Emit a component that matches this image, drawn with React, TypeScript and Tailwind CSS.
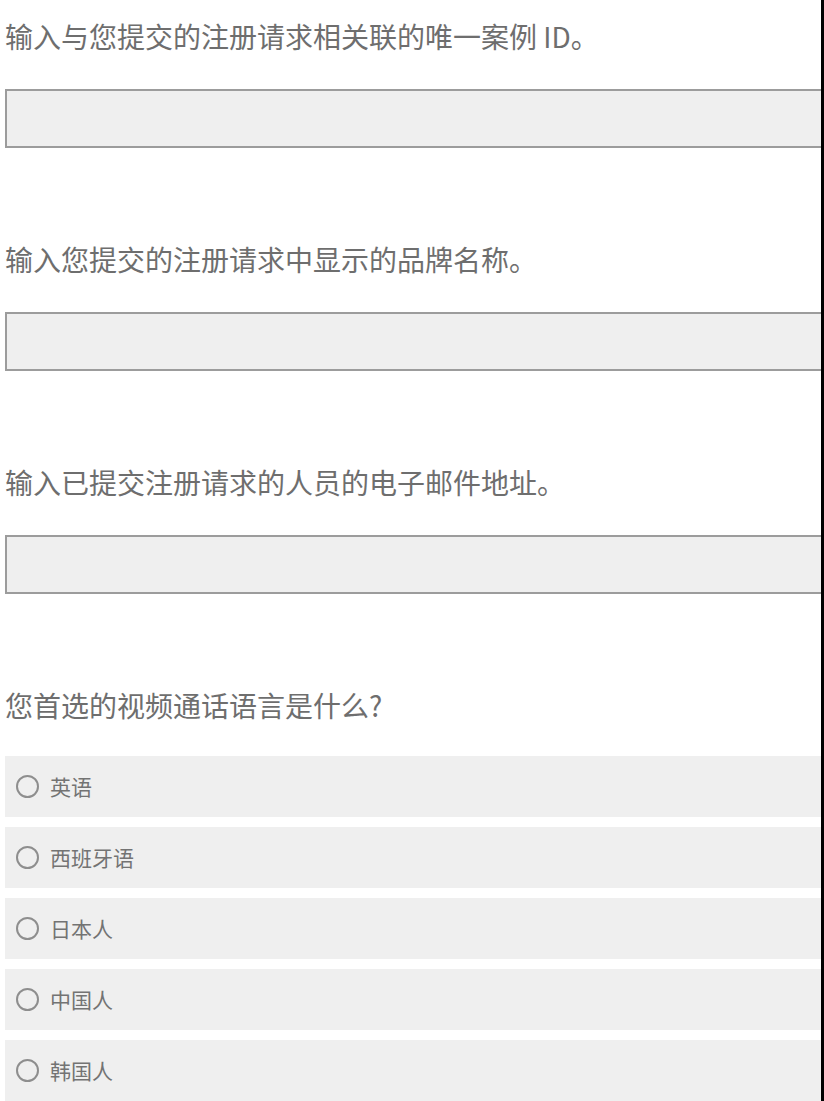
import React from 'react';

const fields = [
  '输入与您提交的注册请求相关联的唯一案例 ID。',
  '输入您提交的注册请求中显示的品牌名称。',
  '输入已提交注册请求的人员的电子邮件地址。',
];

const languages = ['英语', '西班牙语', '日本人', '中国人', '韩国人'];

const App: React.FC = () => {
  return (
    <div className="flex min-h-[1101px] bg-white font-['Noto_Sans_CJK_SC',sans-serif] overflow-hidden">
      <div className="flex-1 pl-[5px] pt-[16px]">
        {fields.map((label) => (
          <div key={label} className="mb-[91px]">
            <div className="text-[28px] leading-[40px] text-[#6e6e6e] whitespace-nowrap">{label}</div>
            <input
              type="text"
              className="block mt-[33px] w-full h-[59px] bg-[#efefef] border-2 border-r-0 border-[#9c9c9c] outline-none"
            />
          </div>
        ))}

        {/* language question */}
        <div className="text-[28px] leading-[40px] text-[#6e6e6e] whitespace-nowrap">您首选的视频通话语言是什么?</div>
        <div className="mt-[31px] flex flex-col gap-[10px]">
          {languages.map((lang) => (
            <label key={lang} className="flex items-center h-[61px] bg-[#efefef] pl-[11px]">
              <span className="w-[23px] h-[23px] rounded-full border-2 border-[#8e8e8e] shrink-0" />
              <span className="ml-[11px] text-[21px] text-[#737373]">{lang}</span>
            </label>
          ))}
        </div>
      </div>
      <div className="w-[3px] bg-black shrink-0" />
    </div>
  );
};

export default App;
